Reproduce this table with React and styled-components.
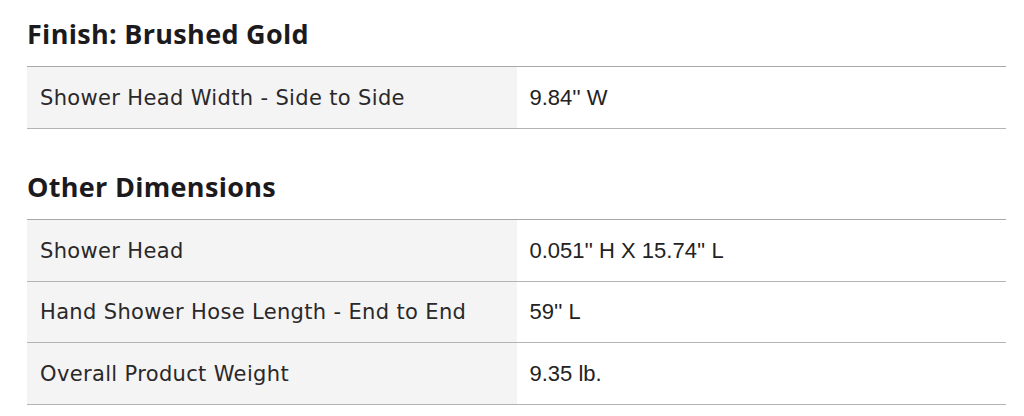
import styled, { createGlobalStyle } from "styled-components";

const GlobalStyle = createGlobalStyle`
  body {
    margin: 0;
    background: #fff;
  }
`;

const specs = [
  {
    title: "Finish: Brushed Gold",
    rows: [["Shower Head Width - Side to Side", "9.84'' W"]],
  },
  {
    title: "Other Dimensions",
    rows: [
      ["Shower Head", "0.051'' H X 15.74'' L"],
      ["Hand Shower Hose Length - End to End", "59'' L"],
      ["Overall Product Weight", "9.35 lb."],
    ],
  },
];

const Page = styled.div`
  padding: 14px 18px 0 27px;
  display: flex;
  flex-direction: column;
  gap: 38px;
`;

const Section = styled.section`
  display: flex;
  flex-direction: column;
`;

const Title = styled.h2`
  margin: 0 0 12px;
  font-family: "Open Sans", "Lato", sans-serif;
  font-weight: 700;
  font-size: 27px;
  letter-spacing: 0.3px;
  line-height: 40px;
  color: #1c1a1c;
`;

const Table = styled.div`
  border-top: 1px solid #a8a8a8;
`;

const Row = styled.div`
  display: grid;
  grid-template-columns: 1fr 1fr;
  height: 60.4px;
  border-bottom: 1px solid #b4b4b4;
  &:first-child {
    height: 61px;
  }
`;

const Label = styled.div`
  display: flex;
  align-items: center;
  padding-left: 13px;
  background: #f4f4f4;
  font-family: "DejaVu Sans", "Open Sans", sans-serif;
  font-size: 21px;
  letter-spacing: 0.35px;
  color: #2a2829;
`;

const Value = styled.div`
  display: flex;
  align-items: center;
  padding-left: 13px;
  font-family: "Liberation Sans", Arial, sans-serif;
  font-size: 22px;
  color: #222;
`;

export default function App() {
  return (
    <>
      <GlobalStyle />
      <Page>
        {specs.map((s) => (
          <Section key={s.title}>
            <Title>{s.title}</Title>
            <Table>
              {s.rows.map(([label, value]) => (
                <Row key={label}>
                  <Label>{label}</Label>
                  <Value>{value}</Value>
                </Row>
              ))}
            </Table>
          </Section>
        ))}
      </Page>
    </>
  );
}
